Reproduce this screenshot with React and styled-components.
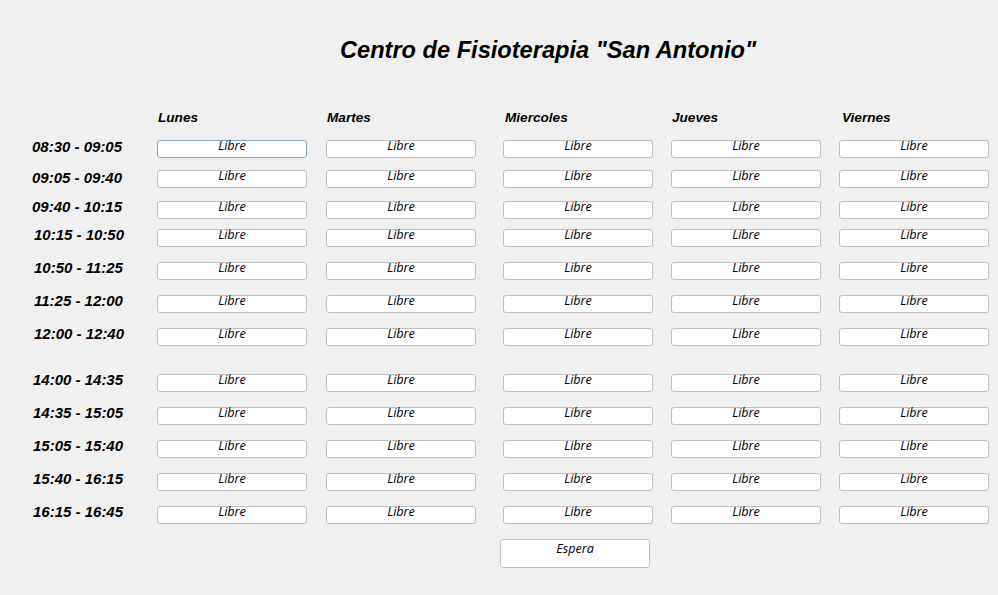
import React from "react";
import styled, { createGlobalStyle } from "styled-components";

const Global = createGlobalStyle`
  html, body { margin: 0; padding: 0; background: #f0f0f0; }
  body { font-family: "Liberation Sans", Arial, sans-serif; }
`;

const Page = styled.div`
  width: 998px;
  height: 595px;
  background: #f0f0f0;
  display: flex;
  flex-direction: column;
  overflow: hidden;
`;

const Title = styled.h1`
  margin: 36px 0 0 340px;
  font-family: "Liberation Sans", Arial, sans-serif;
  font-weight: bold;
  font-style: italic;
  font-size: 23.6px;
  line-height: 28px;
  color: #000;
  white-space: nowrap;
`;

const GridRow = styled.div`
  display: grid;
  grid-template-columns: 157px 169px 177px 168px 168px 150px;
  align-items: start;
  margin-top: ${(p) => p.$mt}px;
`;

const DayLabel = styled.div`
  padding-left: ${(p) => p.$dx}px;
  font-family: "Liberation Sans", Arial, sans-serif;
  font-weight: bold;
  font-style: italic;
  font-size: 13.6px;
  line-height: 15px;
  color: #000;
  white-space: nowrap;
`;

const TimeLabel = styled.div`
  padding-left: ${(p) => p.$dx}px;
  margin-top: ${(p) => p.$dy}px;
  font-family: "Liberation Sans", Arial, sans-serif;
  font-weight: bold;
  font-style: italic;
  font-size: 15px;
  line-height: 18px;
  color: #000;
  white-space: nowrap;
`;

const SlotButton = styled.button`
  box-sizing: border-box;
  width: 150px;
  height: 18px;
  margin: 0;
  padding: 0;
  display: flex;
  justify-content: center;
  align-items: flex-start;
  background: #fff;
  border: 1px solid ${(p) => (p.$focused ? "#7ba7d8" : "#bfbfbf")};
  border-radius: 3px;
  font-family: "Open Sans", "Noto Sans", sans-serif;
  font-style: italic;
  font-size: 12.6px;
  line-height: 10px;
  color: #000;
  overflow: visible;
  cursor: default;
`;

const Footer = styled.div`
  display: flex;
  margin-top: 15px;
  padding-left: 500px;
`;

const WaitButton = styled.button`
  box-sizing: border-box;
  width: 150px;
  height: 29px;
  padding: 3px 0 0;
  display: flex;
  justify-content: center;
  align-items: flex-start;
  background: #fff;
  border: 1px solid #c4c4c4;
  border-radius: 3px;
  font-family: "Open Sans", "Noto Sans", sans-serif;
  font-style: italic;
  font-size: 12.6px;
  line-height: 12px;
  color: #000;
  cursor: default;
`;

const days = [
  { name: "Lunes", dx: 1 },
  { name: "Martes", dx: 1 },
  { name: "Miercoles", dx: 2 },
  { name: "Jueves", dx: 1 },
  { name: "Viernes", dx: 3 },
];

const slots = [
  { t: "08:30 - 09:05", mt: 15, dx: 32, dy: -1.6 },
  { t: "09:05 - 09:40", mt: 12, dx: 32, dy: -1.2 },
  { t: "09:40 - 10:15", mt: 13, dx: 32, dy: -2.8 },
  { t: "10:15 - 10:50", mt: 10, dx: 34, dy: -3.5 },
  { t: "10:50 - 11:25", mt: 15, dx: 34, dy: -3.5 },
  { t: "11:25 - 12:00", mt: 15, dx: 34, dy: -3.5 },
  { t: "12:00 - 12:40", mt: 15, dx: 34, dy: -3.5 },
  { t: "14:00 - 14:35", mt: 28, dx: 33, dy: -3.5 },
  { t: "14:35 - 15:05", mt: 15, dx: 33, dy: -3.5 },
  { t: "15:05 - 15:40", mt: 15, dx: 33, dy: -3.5 },
  { t: "15:40 - 16:15", mt: 15, dx: 33, dy: -3.5 },
  { t: "16:15 - 16:45", mt: 15, dx: 33, dy: -3.5 },
];

export default function App() {
  return (
    <Page>
      <Global />
      <Title>Centro de Fisioterapia "San Antonio"</Title>
      <GridRow $mt={46}>
        <div />
        {days.map((d) => (
          <DayLabel key={d.name} $dx={d.dx}>
            {d.name}
          </DayLabel>
        ))}
      </GridRow>
      {slots.map((s, i) => (
        <GridRow key={s.t} $mt={s.mt}>
          <TimeLabel $dx={s.dx} $dy={s.dy}>
            {s.t}
          </TimeLabel>
          {days.map((d, j) => (
            <SlotButton key={d.name} $focused={i === 0 && j === 0}>
              Libre
            </SlotButton>
          ))}
        </GridRow>
      ))}
      <Footer>
        <WaitButton>Espera</WaitButton>
      </Footer>
    </Page>
  );
}
